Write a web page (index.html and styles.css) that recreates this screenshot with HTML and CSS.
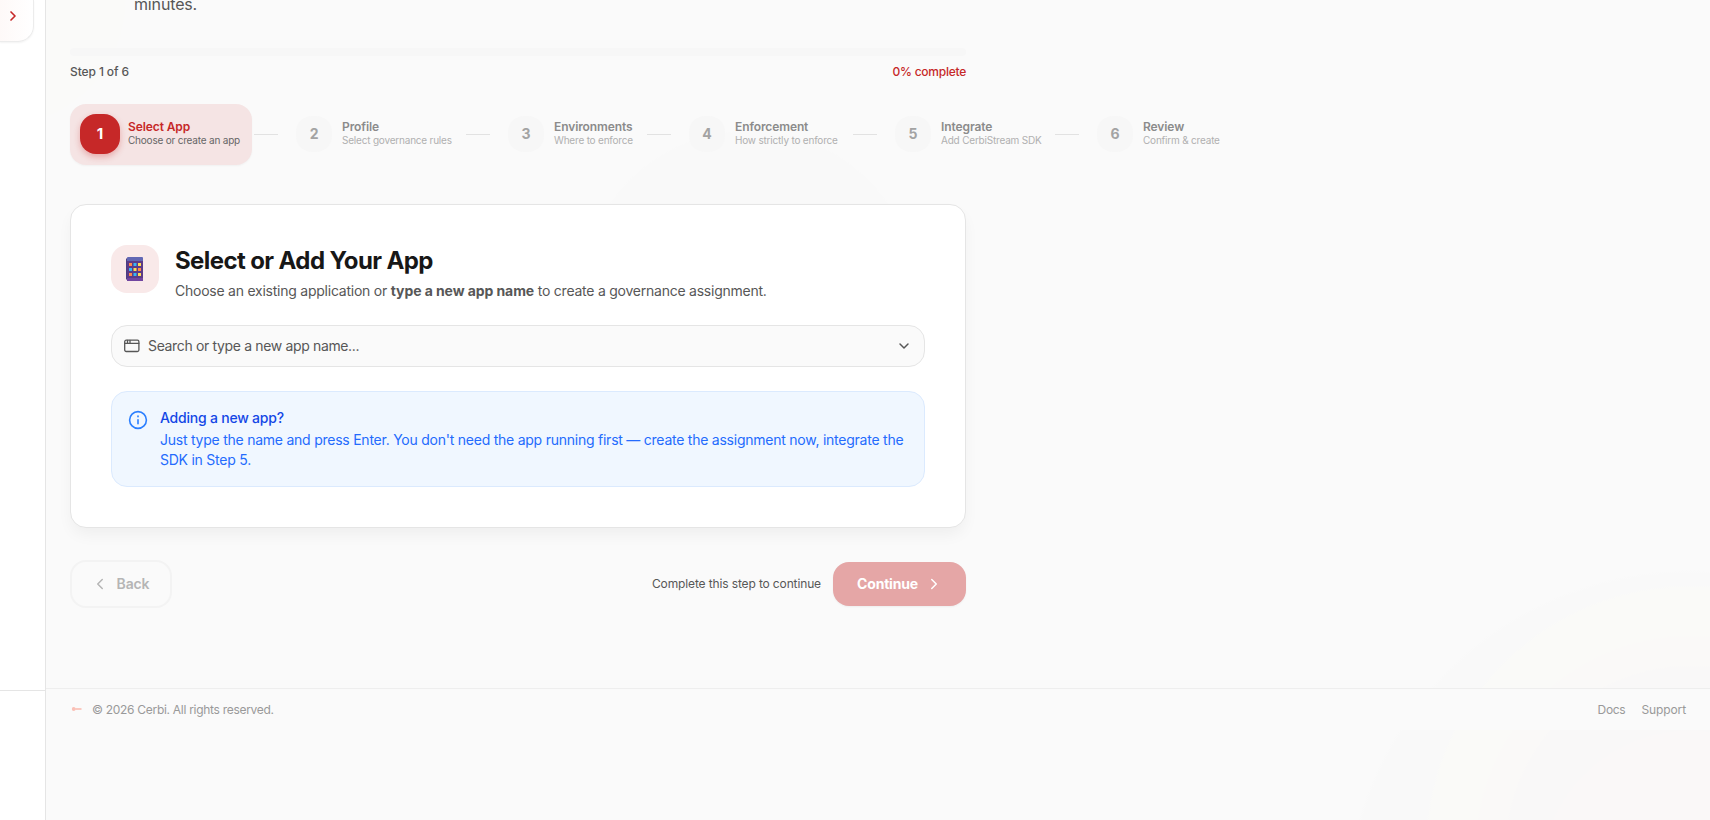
FILE: index.html
```html
<!DOCTYPE html>
<html lang="en">
<head>
  <meta charset="UTF-8">
  <title>Cerbi - Governance Setup</title>
  <meta name="viewport" content="width=device-width, initial-scale=1.0">
  <link rel="stylesheet" href="styles.css">
</head>
<body>

  <aside class="sidebar">
    <div class="sidebar-top">
      <a class="sidebar-item" href="#" aria-label="Expand">
        <svg class="icon" width="16" height="16" viewBox="0 0 24 24"><path d="m9 18 6-6-6-6"/></svg>
      </a>
    </div>
    <div class="sidebar-bottom"></div>
  </aside>

  <div class="page">
    <main class="wizard">
      <p class="intro">minutes.</p>

      <div class="progress"></div>
      <div class="progress-info">
        <span class="step-count">Step 1 of 6</span>
        <span class="percent">0% complete</span>
      </div>

      <nav class="steps">
        <div class="step-cell">
          <div class="step active">
            <span class="badge">1</span>
            <div><h4>Select App</h4><p>Choose or create an app</p></div>
          </div>
          <i class="line"></i>
        </div>
        <div class="step-cell">
          <div class="step">
            <span class="badge">2</span>
            <div><h4>Profile</h4><p>Select governance rules</p></div>
          </div>
          <i class="line"></i>
        </div>
        <div class="step-cell">
          <div class="step">
            <span class="badge">3</span>
            <div><h4>Environments</h4><p>Where to enforce</p></div>
          </div>
          <i class="line"></i>
        </div>
        <div class="step-cell">
          <div class="step">
            <span class="badge">4</span>
            <div><h4>Enforcement</h4><p>How strictly to enforce</p></div>
          </div>
          <i class="line"></i>
        </div>
        <div class="step-cell">
          <div class="step">
            <span class="badge">5</span>
            <div><h4>Integrate</h4><p>Add CerbiStream SDK</p></div>
          </div>
          <i class="line"></i>
        </div>
        <div class="step-cell">
          <div class="step">
            <span class="badge">6</span>
            <div><h4>Review</h4><p>Confirm &amp; create</p></div>
          </div>
        </div>
      </nav>

      <section class="card">
        <header class="card-header">
          <div class="card-icon">
            <svg width="18" height="24" viewBox="0 0 18 24">
              <path fill="#4b3f82" d="M0 2 1 1v22l-1-1z"/>
              <path fill="#5c3b87" d="M1 1h16v23H1z"/>
              <path fill="#6268b4" d="M1 .5 2 0h14l1 .5V4H1z"/>
              <path fill="#7145a0" d="M1 21h16v3H1z"/>
              <path fill="#ff8a4c" d="M3 6h3v3H3zM12 11h3v3h-3zM3 16h3v3H3z"/>
              <path fill="#35b5f5" d="M7.500 6h3v3h-3zM3 11h3v3H3zM7.500 16h3v3h-3z"/>
              <path fill="#ffdb52" d="M12 6h3v3h-3zM7.500 11h3v3h-3zM12 16h3v3h-3z"/>
            </svg>
          </div>
          <div>
            <h2>Select or Add Your App</h2>
            <p class="desc">Choose an existing application or <strong>type a new app name</strong> to create a governance assignment.</p>
          </div>
        </header>

        <div class="select">
          <svg class="icon" width="16" height="16" viewBox="0 0 16 16"><rect x=".7" y="2.200" width="14.200" height="11.300" rx="1.500"/><path d="M.7 5.300h14.200M3.500 2.500v2.500M6 2.500v2.500"/></svg>
          <span class="placeholder">Search or type a new app name...</span>
          <svg class="icon chevron" width="16" height="16" viewBox="0 0 24 24"><path d="m6 9 6 6 6-6"/></svg>
        </div>

        <div class="info">
          <svg class="icon" width="20" height="20" viewBox="0 0 20 20"><circle cx="10" cy="10" r="8.400"/><path d="M10 9.700v4M10 6v.8"/></svg>
          <div>
            <h3>Adding a new app?</h3>
            <p>Just type the name and press Enter. You don't need the app running first — create the assignment now, integrate the<br>SDK in Step 5.</p>
          </div>
        </div>
      </section>

      <div class="actions">
        <button class="btn-back" disabled>
          <svg class="icon" width="18" height="18" viewBox="0 0 24 24"><path d="m15 18-6-6 6-6"/></svg>
          <span>Back</span>
        </button>
        <div class="actions-right">
          <span class="hint">Complete this step to continue</span>
          <button class="btn-continue" disabled>
            <span>Continue</span>
            <svg class="icon" width="18" height="18" viewBox="0 0 24 24"><path d="m9 18 6-6-6-6"/></svg>
          </button>
        </div>
      </div>
    </main>

    <footer class="footer">
      <svg width="14" height="8" viewBox="0 0 14 8"><circle cx="3.700" cy="4" r="1.900" fill="#fac0b6"/><path d="M5 4h6.500" stroke="#fac9c0" stroke-width="2"/></svg>
      <span class="copy">© 2026 Cerbi. All rights reserved.</span>
      <a class="docs" href="#">Docs</a>
      <a href="#">Support</a>
    </footer>
  </div>

</body>
</html>
```
FILE: styles.css
```css
:root {
  --red: #c62828;
  --bg: #fafafa;
  --border: #e5e5e5;
  --text: #171717;
  --muted: #575757;
  --radius: 16px;
}

* {
  margin: 0;
  padding: 0;
  box-sizing: border-box;
}

body {
  height: 820px;
  display: flex;
  overflow: hidden;
  font-family: Inter, sans-serif;
  font-size: 14px;
  letter-spacing: -0.1px;
  color: var(--text);
  background:
    radial-gradient(circle 126px at 0 0, #fafaf9 99%, transparent 100%),
    radial-gradient(circle 150px at 1690px 880px, #faf8f8 99%, transparent 100%),
    radial-gradient(circle 185px at 1690px 850px, #f9f8f8 99%, transparent 100%),
    radial-gradient(circle 215px at 1690px 850px, #faf9f8 99%, transparent 100%),
    radial-gradient(circle 265px at 1690px 850px, #fafaf8 99%, transparent 100%),
    radial-gradient(circle 345px at 1690px 915px, #f9f9f9 99%, transparent 100%),
    radial-gradient(circle 170px at 749px 300px, #f9f9f9 99%, transparent 100%),
    var(--bg);
}

.icon {
  fill: none;
  stroke: currentColor;
  stroke-width: 2;
  stroke-linecap: round;
  stroke-linejoin: round;
  flex-shrink: 0;
}

.sidebar {
  width: 46px;
  flex-shrink: 0;
  background: #fff;
  border-right: 1px solid var(--border);
  display: flex;
  flex-direction: column;
}

.sidebar-top {
  height: 690px;
}

.sidebar-bottom {
  flex: 1;
  border-top: 1px solid var(--border);
}

.sidebar-item {
  display: flex;
  width: 34px;
  height: 42px;
  padding: 8px 0 0 5px;
  color: var(--red);
  background: linear-gradient(90deg, #fef9f8, #fff);
  border: solid #ececec;
  border-width: 0 1px 1px 0;
  border-radius: 0 0 16px 0;
  box-shadow: 0 1px 2px rgba(0, 0, 0, 0.05);
}

.sidebar-item .icon {
  stroke-width: 2.500;
}

.page {
  flex: 1;
}

.wizard {
  width: 944px;
  height: 688px;
  padding: 0 24px;
}

.intro {
  height: 48px;
  padding-left: 64px;
  font-size: 16px;
  line-height: 8px;
  letter-spacing: -0.15px;
  color: var(--muted);
}

.progress {
  height: 8px;
  border-radius: 4px;
  background: #f7f7f7;
}

.progress-info {
  display: flex;
  justify-content: space-between;
  height: 16px;
  margin-top: 8px;
  font-size: 12px;
  font-weight: 500;
  line-height: 16px;
  color: var(--muted);
}

.percent {
  color: var(--red);
  letter-spacing: -0.25px;
}

.steps {
  display: grid;
  grid-template-columns: 216px 212px 181px 206px 202px 144px;
  width: 1161px;
  height: 61px;
  margin-top: 24px;
}

.step-cell {
  display: flex;
  align-items: center;
}

.step {
  flex: 1;
  height: 61px;
  display: flex;
  align-items: center;
  gap: 10px;
  padding: 0 0 1px 10px;
  white-space: nowrap;
  color: #8b8b8b;
}

.step h4 {
  font-size: 12px;
  font-weight: 600;
  line-height: 14px;
  letter-spacing: -0.1px;
}

.step p {
  margin-bottom: 2px;
  font-size: 10px;
  line-height: 12px;
  letter-spacing: -0.2px;
  color: #b0b0b0;
}

.badge {
  width: 36px;
  height: 36px;
  border-radius: 16px;
  background: #f7f7f7;
  color: #a3a3a3;
  font-weight: 700;
  line-height: 36px;
  text-align: center;
}

.step.active {
  gap: 8px;
  background: #f5e4e4;
  color: var(--red);
  border-radius: var(--radius);
  box-shadow: 0 1px 2px rgba(0, 0, 0, 0.04);
}

.step.active p {
  color: #666;
}

.step.active .badge {
  width: 40px;
  height: 40px;
  font-size: 15px;
  line-height: 40px;
  background: var(--red);
  color: #fff;
  box-shadow: 0 3px 6px rgba(198, 40, 40, 0.3);
}

.line {
  width: 24px;
  height: 1px;
  margin: 0 8px 0 2px;
  background: #e2e2e2;
}

.card {
  height: 324px;
  margin-top: 39px;
  padding: 40px;
  background: #fff;
  border: 1px solid var(--border);
  border-radius: var(--radius);
  box-shadow: 0 8px 16px -2px rgba(0, 0, 0, 0.05);
}

.card-header {
  display: flex;
  gap: 16px;
  height: 80px;
}

.card-icon {
  width: 48px;
  height: 48px;
  display: flex;
  align-items: center;
  justify-content: center;
  border-radius: 16px;
  background: #f9e9e9;
}

.card h2 {
  font-size: 24px;
  font-weight: 700;
  line-height: 32px;
  letter-spacing: -0.6px;
}

.desc {
  margin-top: 4px;
  line-height: 20px;
  letter-spacing: -0.24px;
  color: var(--muted);
}

.desc strong {
  letter-spacing: -0.08px;
}

.select {
  display: flex;
  align-items: center;
  gap: 8px;
  height: 42px;
  padding: 0 12px;
  color: var(--muted);
  background: var(--bg);
  border: 1px solid var(--border);
  border-radius: 16px;
}

.placeholder {
  padding-bottom: 1px;
  letter-spacing: -0.35px;
}

.select .icon {
  stroke-width: 1.300;
}

.select .chevron {
  margin-left: auto;
  stroke-width: 2.200;
}

.info {
  display: flex;
  gap: 12px;
  height: 96px;
  margin-top: 24px;
  padding: 16px;
  color: #1447e6;
  background: #f0f7ff;
  border: 1px solid #dbeafe;
  border-radius: 16px;
}

.info .icon {
  margin-top: 2px;
  color: #2b7fff;
  stroke-width: 1.600;
}

.info h3 {
  font-size: 14px;
  font-weight: 500;
  line-height: 20px;
  letter-spacing: -0.22px;
}

.info p {
  margin-top: 2px;
  line-height: 20px;
  letter-spacing: -0.24px;
  color: #246bfd;
  white-space: nowrap;
}

.actions {
  display: flex;
  justify-content: space-between;
  align-items: center;
  margin-top: 32px;
}

.actions-right {
  display: flex;
  align-items: center;
  gap: 12px;
}

button {
  display: flex;
  align-items: center;
  justify-content: center;
  gap: 8px;
  font: inherit;
  font-weight: 600;
  letter-spacing: inherit;
  border: none;
  border-radius: 16px;
}

button span,
.hint {
  padding-bottom: 1px;
}

.btn-back {
  width: 102px;
  height: 48px;
  padding-right: 2px;
  color: #b5b5b5;
  background: transparent;
  border: 2px solid #f3f3f3;
}

.btn-continue {
  width: 133px;
  height: 44px;
  padding-left: 1px;
  gap: 7px;
  color: #fff;
  background: #e5a6a6;
  font-weight: 700;
  letter-spacing: -0.2px;
  box-shadow: 0 1px 2px rgba(0, 0, 0, 0.05);
}

.hint {
  font-size: 12px;
  letter-spacing: -0.13px;
  color: var(--muted);
}

.footer {
  display: flex;
  align-items: center;
  height: 42px;
  padding: 0 24px 1px;
  font-size: 12px;
  color: #999;
  background: var(--bg);
  border-top: 1px solid #eee;
}

.footer a {
  color: inherit;
  text-decoration: none;
  margin-left: 16px;
}

.footer .copy {
  margin-left: 8px;
  letter-spacing: -0.29px;
}

.footer .docs {
  margin-left: auto;
  letter-spacing: -0.3px;
}
```
